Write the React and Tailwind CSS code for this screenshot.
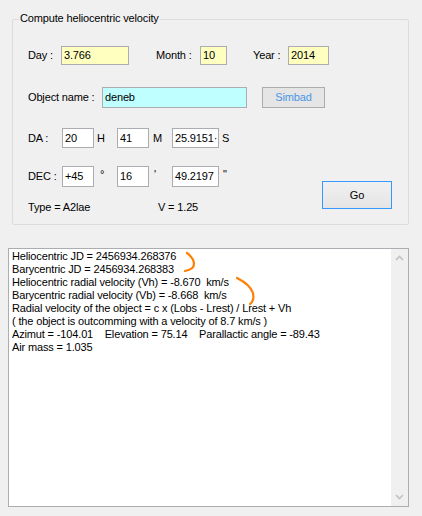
import React from 'react';

const font = { fontFamily: '"Liberation Sans", Arial, sans-serif' };

const Box = ({ value, className }) => (
  <div className={`flex items-center border border-[#abadb3] pl-[2px] text-[11px] text-black overflow-hidden whitespace-nowrap ${className}`}>
    {value}
  </div>
);

const Label = ({ children, className }) => (
  <div className={`text-[11px] text-black whitespace-nowrap ${className}`}>{children}</div>
);

const lines = [
  'Heliocentric JD = 2456934.268376',
  'Barycentric JD = 2456934.268383',
  'Heliocentric radial velocity (Vh) = -8.670  km/s',
  'Barycentric radial velocity (Vb) = -8.668  km/s',
  'Radial velocity of the object = c x (Lobs - Lrest) / Lrest + Vh',
  '( the object is outcomming with a velocity of 8.7 km/s )',
  'Azimut = -104.01    Elevation = 75.14    Parallactic angle = -89.43',
  'Air mass = 1.035',
];

const App = () => {
  return (
    <div className="w-[422px] h-[516px] bg-[#f0f0f0] overflow-hidden tracking-[-0.15px]" style={font}>
      {/* Group box */}
      <div className="pt-[19px] pl-[12px]">
        <div className="relative w-[397px] h-[206px] border border-[#dcdcdc] rounded-[2px]">
          <span className="absolute left-[6px] top-[-8px] bg-[#f0f0f0] px-[1px] text-[11px] leading-[13px] text-black">
            Compute heliocentric velocity
          </span>

          <div className="pl-[15px] pt-[26px]">
            {/* Day / Month / Year */}
            <div className="flex items-center h-[19px]">
              <Label className="w-[33px]">Day :</Label>
              <Box value="3.766" className="w-[68px] h-[19px] bg-[#ffffc0]" />
              <Label className="w-[44px] ml-[27px]">Month :</Label>
              <Box value="10" className="w-[27px] h-[19px] bg-[#ffffc0]" />
              <Label className="w-[35px] ml-[26px]">Year :</Label>
              <Box value="2014" className="w-[41px] h-[19px] bg-[#ffffc0]" />
            </div>

            {/* Object name */}
            <div className="flex items-center h-[21px] mt-[22px]">
              <Label className="w-[74px]">Object name :</Label>
              <Box value="deneb" className="w-[145px] h-[21px] bg-[#c0ffff]" />
              <button className="ml-[15px] w-[63px] h-[21px] border border-[#acacac] bg-[#e5e5e5] text-[11px] text-[#4a96e8]">
                Simbad
              </button>
            </div>

            {/* DA */}
            <div className="flex items-center h-[20px] mt-[20px]">
              <Label className="w-[34px]">DA :</Label>
              <Box value="20" className="w-[32px] h-[20px] bg-white" />
              <Label className="w-[23px] pl-[3px]">H</Label>
              <Box value="41" className="w-[32px] h-[20px] bg-white" />
              <Label className="w-[23px] pl-[4px]">M</Label>
              <Box value="25.9151·" className="w-[47px] h-[20px] bg-white" />
              <Label className="pl-[3px]">S</Label>
            </div>

            {/* DEC + Type / Go */}
            <div className="flex items-start">
              <div className="w-[294px]">
                <div className="flex items-center h-[21px] mt-[18px]">
                  <Label className="w-[34px]">DEC :</Label>
                  <Box value="+45" className="w-[32px] h-[21px] bg-white" />
                  <Label className="w-[23px] pl-[6px] self-start">°</Label>
                  <Box value="16" className="w-[32px] h-[21px] bg-white" />
                  <Label className="w-[23px] pl-[5px] self-start">'</Label>
                  <Box value="49.2197" className="w-[47px] h-[21px] bg-white" />
                  <Label className="pl-[4px] self-start">"</Label>
                </div>
                <div className="flex items-center h-[13px] mt-[14px] text-[11px] leading-[13px]">
                  <span className="w-[130px]">Type = A2lae</span>
                  <span>V = 1.25</span>
                </div>
              </div>
              <button className="mt-[33px] w-[70px] h-[28px] border border-[#3399ff] bg-gradient-to-b from-[#f0f0f0] to-[#e5e5e5] text-[11px] text-black">
                Go
              </button>
            </div>
          </div>
        </div>
      </div>

      {/* Results text area */}
      <div className="pt-[23px] pl-[8px]">
        <div className="relative flex w-[401px] h-[259px] border border-[#abadb3] bg-white">
          <div className="flex-1 pl-[3px] pt-[1px] text-[11px] leading-[13px] text-black whitespace-pre">
            {lines.map((l, i) => (
              <div key={i}>{l}</div>
            ))}
          </div>
          <div className="w-[17px] bg-[#f0f0f0] flex flex-col justify-between items-center py-[6px]">
            <svg width="9" height="6" viewBox="0 0 9 6">
              <path d="M1 5 L4.5 1.5 L8 5" stroke="#c2c2c2" strokeWidth="1.6" fill="none" />
            </svg>
            <svg width="9" height="6" viewBox="0 0 9 6">
              <path d="M1 1 L4.5 4.5 L8 1" stroke="#c2c2c2" strokeWidth="1.6" fill="none" />
            </svg>
          </div>

          {/* hand-drawn annotations */}
          <svg className="absolute left-0 top-0 pointer-events-none" width="401" height="259">
            <path d="M178 4 C182 7 185 11 185 15 C185 19 181 21 176 22" stroke="#ff7f00" strokeWidth="2.2" fill="none" strokeLinecap="round" />
            <path d="M228 29 C236 33 242 38 244 44 C245 49 244 53 241 55" stroke="#ff7f00" strokeWidth="2.2" fill="none" strokeLinecap="round" />
          </svg>
        </div>
      </div>
    </div>
  );
};

export default App;
